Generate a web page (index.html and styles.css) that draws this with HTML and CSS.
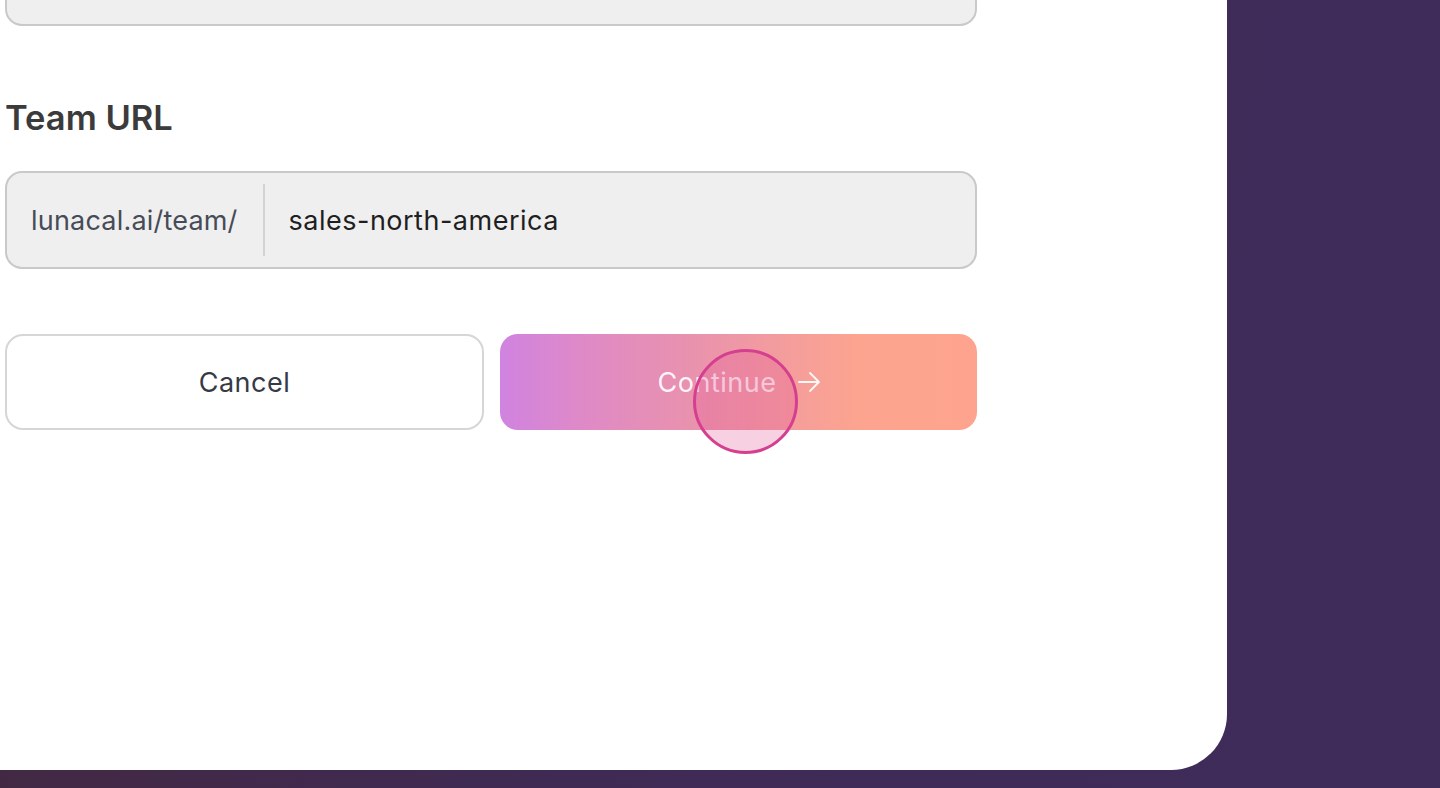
FILE: index.html
```html
<!DOCTYPE html>
<html lang="en">
<head>
<meta charset="utf-8">
<title>Team URL</title>
<link rel="stylesheet" href="styles.css">
</head>
<body>
<div class="stage">
  <main class="card">
    <form class="form">
      <div class="field field-prev"></div>
      <label class="label">Team URL</label>
      <div class="field url-field">
        <span class="prefix">lunacal.ai/team/</span>
        <span class="divider"></span>
        <span class="value">sales-north-america</span>
      </div>
      <div class="actions">
        <button type="button" class="btn btn-cancel">Cancel</button>
        <button type="button" class="btn btn-continue">
          <span>Continue</span>
          <svg class="arrow" width="24" height="22" viewBox="0 0 24 22" fill="none" stroke="currentColor" stroke-width="1.8" stroke-linecap="round" stroke-linejoin="round"><path d="M2 11h20M13 2l9 9-9 9"/></svg>
          <span class="cursor"></span>
        </button>
      </div>
    </form>
  </main>
</div>
</body>
</html>
```

FILE: styles.css
```css
* { box-sizing: border-box; }
html, body { margin: 0; padding: 0; }
body {
  width: 1440px;
  height: 788px;
  overflow: hidden;
  background: linear-gradient(100deg, #43283f 0%, #3f2a52 40%, #3e2b58 70%, #402c5a 100%);
  font-family: Inter, "Noto Sans", sans-serif;
}
.stage { width: 1440px; height: 788px; }
.card {
  width: 1227px;
  height: 770px;
  background: #ffffff;
  border-bottom-right-radius: 56px;
  overflow: hidden;
}
.form {
  width: 982px;
  padding-left: 5px;
  margin-top: -72px;
  display: flex;
  flex-direction: column;
}
.field {
  height: 98px;
  width: 972px;
  background: #efefef;
  border: 2px solid #c9c9c9;
  border-radius: 17px;
}
.label {
  margin-top: 72px;
  font-size: 34.5px;
  font-weight: 600;
  color: #3b3b3b;
  line-height: 40px;
}
.url-field {
  margin-top: 33px;
  display: flex;
  align-items: center;
  padding: 0 0 0 24px;
}
.prefix {
  font-size: 27px;
  color: #474b58;
  letter-spacing: 0.2px;
}
.divider {
  width: 2px;
  height: 72px;
  background: #d3d3d3;
  margin: 0 24px 0 25px;
}
.value {
  font-size: 27px;
  color: #1f1f22;
  letter-spacing: 0.5px;
}
.actions {
  margin-top: 65px;
  display: flex;
  gap: 16px;
  width: 972px;
}
.btn {
  height: 96px;
  border-radius: 18px;
  font-family: inherit;
  font-size: 27px;
  letter-spacing: 0.5px;
  cursor: pointer;
  display: flex;
  align-items: center;
  justify-content: center;
}
.btn-cancel {
  width: 479px;
  background: #ffffff;
  border: 2px solid #d6d6d6;
  color: #353a46;
}
.btn-continue {
  width: 477px;
  position: relative;
  border: none;
  color: rgba(255,255,255,0.92);
  background: linear-gradient(90deg, #d083e0 0%, #df8ac6 18%, #e891b0 38%, #f39c9e 58%, #fca48f 75%, #fea48e 100%);
  gap: 21px;
  padding-left: 8px;
}
.cursor {
  position: absolute;
  left: 193px;
  top: 15px;
  width: 105px;
  height: 105px;
  border-radius: 50%;
  border: 3px solid #d43f8f;
  background: rgba(226, 86, 150, 0.28);
}
```
